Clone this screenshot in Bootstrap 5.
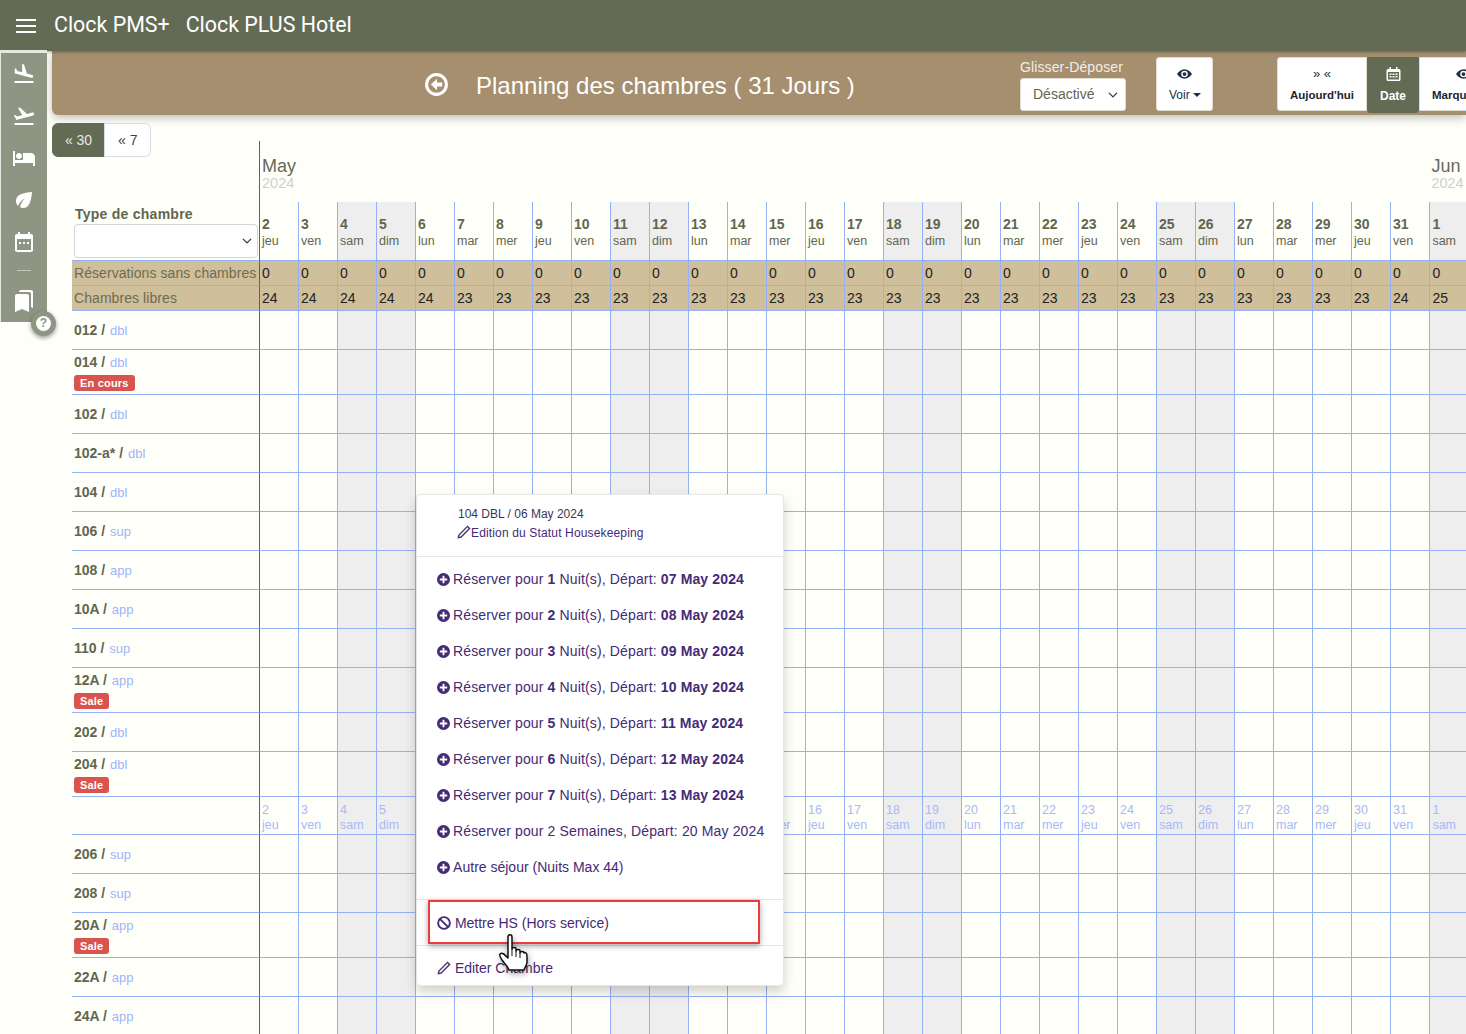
<!DOCTYPE html>
<html lang="fr">
<head>
    <meta charset="UTF-8">
    <meta name="viewport" content="width=device-width, initial-scale=1.0">
    <title>Planning des chambres</title>
    <link href="https://cdn.jsdelivr.net/npm/bootstrap@5.3.0/dist/css/bootstrap.min.css" rel="stylesheet">
    <style>
        html, body { height: 100%; overflow: hidden; }
        body { background-color: #fffffa; font-family: "Liberation Sans", Arial, sans-serif; font-size: 14px; color: #5f664f; position: relative; }
        .top-bar { background-color: #636b55; height: 51px; padding: 0 0 0 16px; justify-content: flex-start; box-shadow: 0 1px 3px rgba(0,0,0,.35); position: relative; z-index: 3; }
        .top-bar .navbar-brand { font-family: Roboto, sans-serif; font-size: 21.400px; color: #fff; padding: 0; margin: 0 16px 0 0; }
        .burger { width: 20px; height: 14px; margin-right: 18px; display: flex; flex-direction: column; justify-content: space-between; }
        .burger span { display: block; height: 2px; background: #fff; }
        .side-rail { width: 47px; height: 272px; flex: none; background-color: #8e9582; border-top: 3px solid #e6e7e1; border-left: 1px solid #e6e7e1; align-items: center; padding: 9px 1px 0 0; gap: 18px; margin-top: -1px; position: relative; z-index: 4; }
        .side-rail svg { width: 24px; height: 24px; fill: #fff; display: block; }
        .side-rail hr { width: 14px; margin: -2px 0 0; border-top: 1px solid #c5c9bc; opacity: 1; }
        .help-dot { position: absolute; left: 30px; top: 258px; width: 25px; height: 25px; border-radius: 50%; background: #8e9582; box-shadow: 0 2px 4px rgba(0,0,0,.4); }
        .help-dot span { position: absolute; left: 5px; top: 5px; width: 15px; height: 15px; border-radius: 50%; background: #fff; color: #8e9582; font-size: 12px; font-weight: bold; line-height: 15px; text-align: center; }
        .main-col { margin-left: 5px; min-width: 0; }
        .title-strip { background-color: #a58f6f; height: 64px; border-radius: 0 0 0 6px; box-shadow: 0 3px 10px rgba(0,0,0,.25); padding-left: 372px; color: #fff; overflow: hidden; white-space: nowrap; align-items: flex-start; }
        .back-ico { width: 25px; height: 25px; margin-top: 21px; margin-right: 27px; flex: none; }
        .page-title { font-size: 24px; font-weight: normal; margin: 21px 165px 0 0; line-height: 28px; width: 379px; flex: none; }
        .dd-box { width: 106px; flex: none; margin-right: 30px; }
        .dd-box label { display: block; font-size: 14px; line-height: 16px; margin-top: 8px; margin-bottom: 3px; color: #f2eee6; letter-spacing: .12px; }
        .dd-box .form-select { height: 33px; font-size: 14px; padding: 0 0 0 12px; color: #5f664f; border-color: #e3ddd0; border-radius: 3px; background-position: right 6px center; background-size: 12px 10px; }
        .tool-btn { background: #fff; border: 1px solid #e3ddd0; border-radius: 3px; height: 54px; margin-top: 6px; font-size: 12px; line-height: 15px; color: #20304a; padding: 10px 12px 0; text-align: center; flex: none; }
        .tool-btn svg { display: block; margin: 0 auto 8px; width: 15px; height: 12px; }
        .tool-btn.voir { width: 57px; margin-right: 64px; }
        .tool-btn.voir i { display: inline-block; border-top: 4px solid #20304a; border-left: 4px solid transparent; border-right: 4px solid transparent; vertical-align: 2px; }
        .tool-btn b { display: block; color: #1c2533; font-size: 11.500px; }
        .tool-btn.today { width: 90px; border-radius: 3px 0 0 3px; }
        .tool-btn.today span { display: block; height: 12px; line-height: 11px; margin-bottom: 8px; font-size: 13px; }
        .tool-btn.datebtn { width: 52px; background: #636b55; border-color: #636b55; color: #fff; height: 56px; border-radius: 0 0 3px 3px; padding-top: 9px; font-weight: bold; }
        .tool-btn.datebtn svg { fill: #fff; margin-bottom: 8px; height: 14px; }
        .tool-btn.marq { width: 90px; border-radius: 0 3px 3px 0; text-align: left; }
        .tool-btn.marq svg { margin-left: 24px; }
        .step-group { margin: 8px 0 -16px 0; position: relative; z-index: 1; }
        .step-group .btn { font-size: 14px; height: 34px; line-height: 20px; padding: 6px 13px; background: #fff; border-color: #d9dce6; color: #444; }
        .step-group .btn.on { background: #636b55; border-color: #636b55; color: #e8e9e2; width: 53px; padding: 6px 0; }
        .plan-wrap { margin-left: 20px; overflow: hidden; }
        .plan-grid { table-layout: fixed; border-collapse: separate; border-spacing: 0; width: 1396px; }
        .plan-grid td { border-left: 1px solid #96b0f5; border-bottom: 1px solid #96b0f5; padding: 0 0 0 2px; height: 39px; vertical-align: middle; overflow: visible; white-space: nowrap; }
        .plan-grid td.lbl { border-left: 0; border-right: 1px solid #d93025; font-size: 14px; }
        .plan-grid td.lbl + td { border-left: 0; }
        .plan-grid td.we { background: #eeeeee; }
        .plan-grid .tall td { height: 45px; }
        .plan-grid .tall td.lbl { vertical-align: top; padding-top: 4px; line-height: 16px; }
        .plan-grid tr.months td { height: 61px; border-bottom: 0; vertical-align: top; padding: 16px 0 0 2px; }
        .plan-grid tr.months td:last-child { border-left: 0; }
        .month-name { font-size: 18px; line-height: 19px; display: block; color: #666a5c; }
        .month-year { font-size: 14.500px; line-height: 15px; display: block; color: #cfcfcf; }
        .plan-grid tr.days td { height: 59px; padding-top: 14px; line-height: 17px; vertical-align: top; font-size: 12.500px; }
        .plan-grid tr.days td.lbl { padding: 4px 0 0 2px; }
        .plan-grid tr.days b { display: block; font-size: 14px; }
        .plan-grid tr.repeat td { height: 38px; font-size: 12.500px; line-height: 15px; padding-top: 6px; color: #a8b8f8; vertical-align: top; }
        .plan-grid tr.repeat b { display: block; font-weight: normal; }
        .plan-grid tr.tan td { background: #cfbf9b; height: 25px; color: #222; }
        .plan-grid tr.tan td.lbl { color: #6e6c52; letter-spacing: .07px; }
        .type-label { font-weight: bold; font-size: 14px; line-height: 17px; margin-left: 1px; letter-spacing: .25px; }
        .type-select { height: 34px; width: 184px; padding: 0 8px; border-radius: 4px; border-color: #d5d5d5; margin-top: 1px; background-position: right 4px center; background-size: 12px 10px; }
        .room-no { font-weight: bold; }
        .room-type { color: #9fb3f8; font-size: 13px; margin-left: 1px; }
        .state-tag { display: block; width: fit-content; background: #d9534f; font-size: 11px; padding: 2px 6px; line-height: 12px; border-radius: 3px; margin-top: 4px; font-weight: bold; letter-spacing: .2px; }
        .cell-menu { display: block; position: absolute; left: 416px; top: 494px; width: 368px; height: 492px; padding: 0; margin: 0; border: 1px solid #e8e8e8; border-radius: 4px; box-shadow: 0 6px 12px rgba(0,0,0,.18); font-size: 14px; color: #452a75; z-index: 5; }
        .cell-head { padding: 9px 0 0 40px; height: 61px; font-size: 12px; line-height: 20px; color: #3c3556; }
        .cell-head div:first-child { padding-left: 1px; }
        .cell-head div + div { color: #452a75; letter-spacing: .15px; margin-top: -1px; }
        .cell-menu .dropdown-divider { margin: 0; border-color: #e6e6e6; opacity: 1; }
        .cell-menu .dropdown-item { color: #452a75; padding: 0 0 0 20px; height: 36px; line-height: 36px; white-space: nowrap; font-size: 14px; }
        .cell-menu .dropdown-item.stay { letter-spacing: .14px; }
        .cell-menu .dropdown-item.stay .menu-ico { margin-right: -1px; }
        .cell-menu .first-item { margin-top: 4px; }
        .menu-ico { width: 13px; height: 13px; fill: #452a75; vertical-align: -2px; }
        .menu-ico.edit { width: 14px; height: 14px; }
        .cell-menu .last-list { margin-bottom: 14px; }
        .cell-menu .dropdown-item.hs { height: 45px; line-height: 47px; }
        .cell-menu .dropdown-item.ed { height: 44px; line-height: 44px; }
        .mark-box { position: absolute; left: 428px; top: 900px; width: 332px; height: 44px; border: 2px solid #ee3b3b; box-shadow: 0 2px 6px rgba(0,0,0,.35); z-index: 6; }
        .hand-cur { position: absolute; left: 498px; top: 933px; width: 32px; height: 40px; z-index: 7; filter: drop-shadow(1px 3px 3px rgba(0,0,0,.35)); }
    </style>
</head>
<body>

<nav class="navbar top-bar">
    <div class="burger"><span></span><span></span><span></span></div>
    <span class="navbar-brand">Clock PMS+</span>
    <span class="navbar-brand">Clock PLUS Hotel</span>
</nav>

<div class="d-flex">
    <!-- Menu lateral -->
    <div class="side-rail d-flex flex-column">
        <svg viewBox="0 0 24 24"><path d="M2.5 19h19v2h-19v-2zm7.18-5.73l4.35 1.16 5.31 1.42c.8.21 1.62-.26 1.84-1.06.21-.8-.26-1.62-1.06-1.84l-5.31-1.42-2.76-9.02L10.12 2v8.28L5.15 8.95l-.93-2.32-1.45-.39v5.17l1.6.43 5.31 1.43z"/></svg>
        <svg viewBox="0 0 24 24"><path d="M2.5 19h19v2h-19v-2zm19.57-9.36c-.21-.8-1.04-1.28-1.84-1.06L14.92 10l-6.9-6.43-1.93.51 4.14 7.17-4.97 1.33-1.97-1.54-1.45.39 1.82 3.16.77 1.33 1.6-.43 5.31-1.42 4.35-1.16L21 11.49c.81-.23 1.28-1.05 1.07-1.85z"/></svg>
        <svg viewBox="0 0 24 24"><path d="M7 13c1.66 0 3-1.34 3-3S8.66 7 7 7s-3 1.34-3 3 1.34 3 3 3zm12-6h-8v7H3V5H1v15h2v-3h18v3h2v-9c0-2.21-1.79-4-4-4z"/></svg>
        <svg viewBox="0 0 24 24"><path d="M6.05 8.05c-2.73 2.73-2.73 7.15-.02 9.88 1.47-3.4 4.09-6.24 7.36-7.93-2.77 2.34-4.71 5.61-5.39 9.32 2.6 1.23 5.8.78 7.95-1.37C19.43 14.47 20 4 20 4S9.53 4.57 6.05 8.05z"/></svg>
        <svg viewBox="0 0 24 24"><path d="M9 12H7v2h2v-2zm4 0h-2v2h2v-2zm4 0h-2v2h2v-2zm2-8h-1V2h-2v2H8V2H6v2H5c-1.1 0-2 .9-2 2v14c0 1.1.9 2 2 2h14c1.1 0 2-.9 2-2V6c0-1.1-.9-2-2-2zm0 16H5V9h14v11z"/></svg>
        <hr>
        <svg viewBox="0 0 24 24"><path d="M19 18l2 1V3c0-1.1-.9-2-2-2H8.99C7.89 1 7 1.9 7 3h10c1.1 0 2 .9 2 2v13zM15 5H5c-1.1 0-2 .9-2 2v16l7-3 7 3V7c0-1.1-.9-2-2-2z"/></svg>
        <div class="help-dot"><span>?</span></div>
    </div>

    <div class="main-col flex-fill">
        <!-- Bandeau titre -->
        <div class="title-strip d-flex">
            <svg class="back-ico" viewBox="0 0 24 24"><path fill="#fff" d="M12 1a11 11 0 1 0 0 22 11 11 0 0 0 0-22zm0 3a8 8 0 1 1 0 16 8 8 0 0 1 0-16z"/><path fill="#fff" d="M12.5 6.5 6.5 12l6 5.500v-3.500h5v-4h-5z"/></svg>
            <h1 class="page-title">Planning des chambres ( 31 Jours )</h1>
            <div class="dd-box">
                <label>Glisser-Déposer</label>
                <select class="form-select"><option>Désactivé</option></select>
            </div>
            <div class="tool-btn voir">
                <svg viewBox="0 0 16 12"><path fill="#20304a" d="M8 1C4.500 1 1.700 3.300 0 6c1.700 2.700 4.500 5 8 5s6.300-2.300 8-5c-1.700-2.700-4.500-5-8-5zm0 8.500A3.500 3.500 0 1 1 8 2.500a3.500 3.500 0 0 1 0 7zM8 4a2 2 0 1 0 0 4 2 2 0 0 0 0-4z"/></svg>
                Voir <i></i>
            </div>
            <div class="tool-btn today"><span>» «</span><b>Aujourd'hui</b></div>
            <div class="tool-btn datebtn">
                <svg viewBox="0 0 14 14"><path d="M3 0h1.500v2h5V0H11v2h1.500A1.500 1.500 0 0 1 14 3.500v9a1.500 1.500 0 0 1-1.500 1.500h-11A1.500 1.500 0 0 1 0 12.500v-9A1.500 1.500 0 0 1 1.500 2H3zM1.500 5v7.500h11V5zM3 6.500h2v1.500H3zm3 0h2v1.500H6zm3 0h2v1.500H9zM3 9h2v1.500H3zm3 0h2v1.500H6zm3 0h2v1.500H9z"/></svg>
                Date
            </div>
            <div class="tool-btn marq">
                <svg viewBox="0 0 16 12"><path fill="#20304a" d="M8 1C4.500 1 1.700 3.300 0 6c1.700 2.700 4.500 5 8 5s6.300-2.300 8-5c-1.700-2.700-4.500-5-8-5zm0 8.500A3.500 3.500 0 1 1 8 2.500a3.500 3.500 0 0 1 0 7zM8 4a2 2 0 1 0 0 4 2 2 0 0 0 0-4z"/></svg>
                <b>Marquer</b>
            </div>
        </div>

        <div class="btn-group step-group">
            <button type="button" class="btn on">« 30</button>
            <button type="button" class="btn">« 7</button>
        </div>

        <!-- Grille du planning -->
        <div class="plan-wrap">
            <table class="plan-grid">
                <colgroup id="plan-cols"></colgroup>
                <tbody id="plan-body"></tbody>
            </table>
        </div>
    </div>
</div>

<!-- Menu de la cellule -->
<div class="dropdown-menu cell-menu">
    <div class="cell-head">
        <div>104 DBL / 06 May 2024</div>
        <div><svg class="menu-ico edit" viewBox="0 0 16 16"><path fill-rule="evenodd" d="M12 .5 15.500 4 5 14.500.5 15.500 1.500 11zM12 2.700 3 11.700 2.500 13.500 4.300 13 13.300 4z"/></svg>Edition du Statut Housekeeping</div>
    </div>
    <div class="dropdown-divider"></div>
    <div id="stay-list" class="first-item"></div>
    <div class="dropdown-divider"></div>
    <a class="dropdown-item hs" href="#"><svg class="menu-ico edit" viewBox="0 0 16 16"><circle cx="8" cy="8" r="6.700" fill="none" stroke="#452a75" stroke-width="2.200"/><path d="M3.500 3.500l9 9" stroke="#452a75" stroke-width="2.200"/></svg> Mettre HS (Hors service)</a>
    <div class="dropdown-divider"></div>
    <a class="dropdown-item ed" href="#"><svg class="menu-ico edit" viewBox="0 0 16 16"><path fill-rule="evenodd" d="M12 .5 15.500 4 5 14.500.5 15.500 1.500 11zM12 2.700 3 11.700 2.500 13.500 4.300 13 13.300 4z"/></svg> Editer Chambre</a>
</div>

<div class="mark-box"></div>
<svg class="hand-cur" viewBox="0 0 32 40"><path fill="#fff" stroke="#111" stroke-width="1.500" stroke-linejoin="round" d="M10 4c0-3 4-3 4 0v12c0-2 4-2 4 0v2c0-2 4-2 4 0v2c0-2 4-2 4 0 0 0 1-1 2 0s1 2 1 3v6c0 3-2 5-3 8H11c-1-3-4-6-7-10-2-3-3-5-2-6 2-2 4 0 8 4z"/><path stroke="#111" stroke-width="1" d="M14 16v7M18 18v6M22 20v5"/></svg>

<script>
    const dayNames = ["jeu", "ven", "sam", "dim", "lun", "mar", "mer"];
    const dayNums = [];
    for (let d = 2; d <= 31; d++) dayNums.push(d);
    dayNums.push(1);

    const isWeekend = i => { let n = dayNames[i % 7]; return n === "sam" || n === "dim"; };

    function freeRooms(i) {
        if (i < 5) return 24;
        if (i === 29) return 24;
        if (i === 30) return 25;
        return 23;
    }

    function emptyCells() {
        return dayNums.map((d, i) => `<td class="${isWeekend(i) ? "we" : ""}"></td>`).join("");
    }

    function dayCells() {
        return dayNums.map((d, i) => `<td class="${isWeekend(i) ? "we" : ""}"><b>${d}</b>${dayNames[i % 7]}</td>`).join("");
    }

    // largeurs des colonnes
    document.getElementById("plan-cols").innerHTML =
        `<col width="188"><col width="38">` + dayNums.slice(1).map(() => `<col width="39">`).join("");

    let html = `<tr class="months"><td class="lbl"></td>
        <td colspan="30"><span class="month-name">May</span><span class="month-year">2024</span></td>
        <td><span class="month-name">Jun</span><span class="month-year">2024</span></td></tr>`;

    html += `<tr class="days"><td class="lbl"><div class="type-label">Type de chambre</div>
        <select class="form-select type-select"><option></option></select></td>${dayCells()}</tr>`;

    html += `<tr class="tan"><td class="lbl">Réservations sans chambres</td>${dayNums.map(() => "<td>0</td>").join("")}</tr>`;
    html += `<tr class="tan"><td class="lbl">Chambres libres</td>${dayNums.map((d, i) => `<td>${freeRooms(i)}</td>`).join("")}</tr>`;

    const rooms = [
        ["012", "dbl"], ["014", "dbl", "En cours"], ["102", "dbl"], ["102-a*", "dbl"], ["104", "dbl"],
        ["106", "sup"], ["108", "app"], ["10A", "app"], ["110", "sup"], ["12A", "app", "Sale"],
        ["202", "dbl"], ["204", "dbl", "Sale"], null,
        ["206", "sup"], ["208", "sup"], ["20A", "app", "Sale"], ["22A", "app"], ["24A", "app"]
    ];

    rooms.forEach(r => {
        if (!r) {
            html += `<tr class="repeat"><td class="lbl"></td>${dayCells()}</tr>`;
            return;
        }
        let tag = r[2] ? `<span class="badge state-tag">${r[2]}</span>` : "";
        html += `<tr class="${r[2] ? "tall" : ""}"><td class="lbl"><span class="room-no">${r[0]} /</span> <span class="room-type">${r[1]}</span>${tag}</td>${emptyCells()}</tr>`;
    });

    document.getElementById("plan-body").innerHTML = html;

    // lignes du menu
    const plus = `<svg class="menu-ico" viewBox="1 1 14 14"><path fill-rule="evenodd" d="M8 1a7 7 0 1 0 0 14A7 7 0 0 0 8 1zM7 4h2v3h3v2H9v3H7V9H4V7h3z"/></svg>`;
    let items = "";
    for (let n = 1; n <= 7; n++) {
        let dep = String(6 + n).padStart(2, "0");
        items += `<a class="dropdown-item stay" href="#">${plus} Réserver pour <b>${n}</b> Nuit(s), Départ: <b>${dep} May 2024</b></a>`;
    }
    items += `<a class="dropdown-item stay" href="#">${plus} Réserver pour 2 Semaines, Départ: 20 May 2024</a>`;
    items += `<a class="dropdown-item last-list" href="#">${plus} Autre séjour (Nuits Max 44)</a>`;
    document.getElementById("stay-list").innerHTML = items;
</script>

<script src="https://cdn.jsdelivr.net/npm/bootstrap@5.3.0/dist/js/bootstrap.bundle.min.js"></script>
</body>
</html>
